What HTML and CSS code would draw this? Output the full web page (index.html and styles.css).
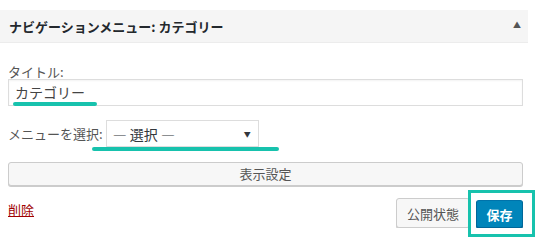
FILE: index.html
```html
<!DOCTYPE html>
<html lang="ja">
<head>
    <meta charset="UTF-8">
    <meta name="viewport" content="width=device-width, initial-scale=1.0">
    <link rel="stylesheet" href="styles.css">
    <title>ナビゲーションメニュー</title>
</head>
<body>
    <div class="widget">
        <div class="widget-top">
            <h3 class="widget-title">ナビゲーションメニュー: カテゴリー</h3>
            <span class="toggle">&#9650;</span>
        </div>
        <div class="widget-inside">
            <div class="field">
                <label class="label">タイトル:</label>
                <div class="text-input">カテゴリー</div>
            </div>
            <div class="field row">
                <label class="label">メニューを選択:</label>
                <div class="select">— 選択 —<span class="arrow">&#9660;</span></div>
            </div>
            <button class="button wide">表示設定</button>
            <div class="actions">
                <a class="delete" href="#">削除</a>
                <div class="buttons">
                    <button class="button">公開状態</button>
                    <button class="button primary">保存</button>
                </div>
            </div>
        </div>
    </div>

    <span class="mark mark-title"></span>
    <span class="mark mark-select"></span>
    <span class="mark-box"></span>
</body>
</html>
```

FILE: styles.css
```css
body {
    margin: 0;
    padding-top: 10px;
    background-color: #ffffff;
    font-family: "Noto Sans CJK JP", "Liberation Sans", sans-serif;
    font-size: 13px;
    color: #555555;
}
.widget {
    width: 528px;
}
.widget-top {
    display: flex;
    align-items: center;
    justify-content: space-between;
    height: 32px;
    padding: 0 7px 0 9px;
    background-color: #f5f5f5;
    border-bottom: 1px solid #ececec;
}
.widget-title {
    margin: 0;
    font-size: 13px;
    font-weight: bold;
    color: #23282d;
}
.toggle {
    font-size: 8px;
    color: #555555;
    margin-top: -4px;
}
.widget-inside {
    padding: 21px 5px 0 8px;
}
.label {
    display: block;
    line-height: 15px;
}
.text-input {
    box-sizing: border-box;
    height: 27px;
    padding: 0 6px;
    border: 1px solid #dddddd;
    box-shadow: inset 0 1px 2px rgba(0, 0, 0, 0.05);
    font-size: 14px;
    line-height: 25px;
    color: #444444;
}
.row {
    display: flex;
    align-items: center;
    margin-top: 14px;
}
.row .label {
    margin-right: 3px;
}
.select {
    box-sizing: border-box;
    display: flex;
    justify-content: space-between;
    align-items: center;
    width: 153px;
    height: 27px;
    padding: 0 6px 0 6px;
    border: 1px solid #dddddd;
    font-size: 14px;
    color: #32373c;
}
.arrow {
    font-size: 7px;
    margin-right: 1px;
    color: #32373c;
}
.button {
    box-sizing: border-box;
    height: 30px;
    padding: 0 10px;
    border: 1px solid #cccccc;
    border-radius: 3px;
    background-color: #f7f7f7;
    box-shadow: 0 1px 0 #cccccc;
    font-family: "Noto Sans CJK JP", "Liberation Sans", sans-serif;
    font-size: 13px;
    color: #555555;
}
.wide {
    display: block;
    width: 100%;
    height: 24px;
    margin-top: 15px;
    line-height: 20px;
}
.actions {
    display: flex;
    justify-content: space-between;
    align-items: flex-end;
    margin-top: 12px;
}
.delete {
    align-self: flex-start;
    margin-top: 3px;
    line-height: 18px;
    color: #a00000;
}
.buttons {
    display: flex;
    align-items: flex-end;
    gap: 6px;
}
.primary {
    width: 47px;
    height: 28px;
    padding: 0;
    background-color: #0085ba;
    border-color: #0073aa #006799 #006799;
    box-shadow: 0 1px 0 #006799;
    color: #ffffff;
    font-weight: bold;
}
.mark {
    position: absolute;
    height: 4px;
    border-radius: 2px;
    background-color: #17c2ad;
}
.mark-title {
    left: 13px;
    top: 102px;
    width: 84px;
}
.mark-select {
    left: 92px;
    top: 147px;
    width: 187px;
}
.mark-box {
    position: absolute;
    left: 468px;
    top: 190px;
    width: 67px;
    height: 47px;
    box-sizing: border-box;
    border: 3px solid #17c2ad;
}
```
